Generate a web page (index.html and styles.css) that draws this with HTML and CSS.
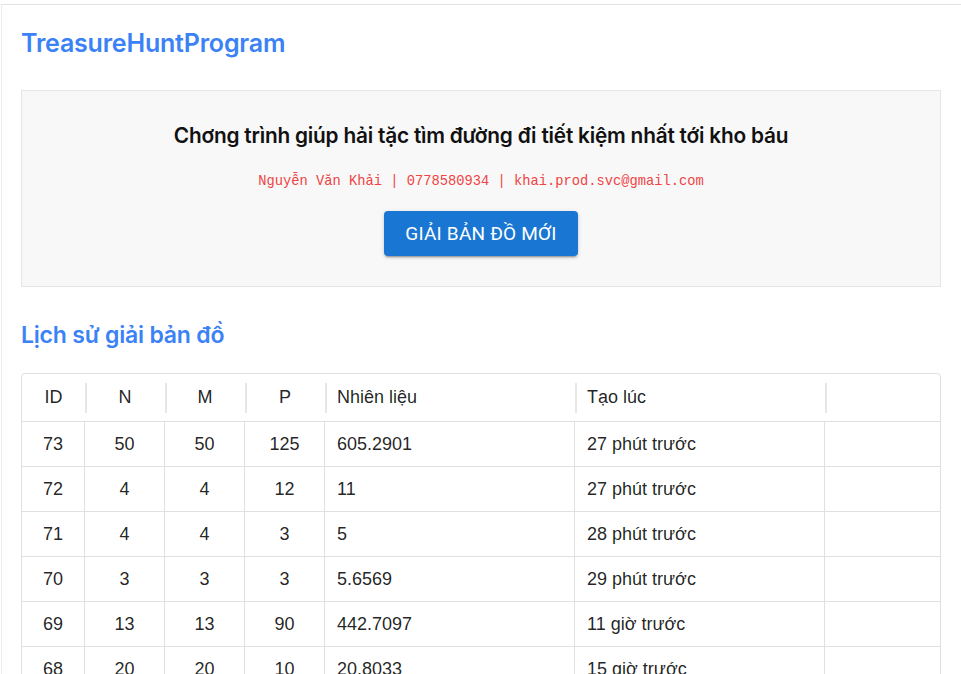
FILE: index.html
```html
<!DOCTYPE html>
<html lang="vi">
<head>
<meta charset="utf-8">
<title>TreasureHuntProgram</title>
<link rel="stylesheet" href="styles.css">
</head>
<body>
<div class="page">
  <h1 class="brand">TreasureHuntProgram</h1>
  <section class="intro">
    <h2 class="intro-title">Chơng trình giúp hải tặc tìm đường đi tiết kiệm nhất tới kho báu</h2>
    <p class="author">Nguyễn Văn Khải | 0778580934 | khai.prod.svc@gmail.com</p>
    <button class="btn-primary" type="button">GIẢI BẢN ĐỒ MỚI</button>
  </section>
  <h2 class="section-title">Lịch sử giải bản đồ</h2>
  <div class="grid-wrap">
    <table class="grid">
      <colgroup>
        <col class="c-id"><col class="c-num"><col class="c-num"><col class="c-num"><col class="c-wide"><col class="c-wide"><col>
      </colgroup>
      <thead>
        <tr>
          <th class="center">ID</th>
          <th class="center">N</th>
          <th class="center">M</th>
          <th class="center">P</th>
          <th>Nhiên liệu</th>
          <th>Tạo lúc</th>
          <th class="last"></th>
        </tr>
      </thead>
      <tbody>
        <tr><td class="center">73</td><td class="center">50</td><td class="center">50</td><td class="center">125</td><td>605.2901</td><td>27 phút trước</td><td></td></tr>
        <tr><td class="center">72</td><td class="center">4</td><td class="center">4</td><td class="center">12</td><td>11</td><td>27 phút trước</td><td></td></tr>
        <tr><td class="center">71</td><td class="center">4</td><td class="center">4</td><td class="center">3</td><td>5</td><td>28 phút trước</td><td></td></tr>
        <tr><td class="center">70</td><td class="center">3</td><td class="center">3</td><td class="center">3</td><td>5.6569</td><td>29 phút trước</td><td></td></tr>
        <tr><td class="center">69</td><td class="center">13</td><td class="center">13</td><td class="center">90</td><td>442.7097</td><td>11 giờ trước</td><td></td></tr>
        <tr><td class="center">68</td><td class="center">20</td><td class="center">20</td><td class="center">10</td><td>20.8033</td><td>15 giờ trước</td><td></td></tr>
      </tbody>
    </table>
  </div>
</div>
</body>
</html>
```
FILE: styles.css
```css
html, body {
  margin: 0;
  padding: 0;
  background: #ffffff;
}

.page {
  margin: 4px 0 0 1px;
  border-top: 1px solid #e3e3e3;
  border-left: 1px solid #ececec;
  padding: 0 20px 40px 19px;
  font-family: "Liberation Sans", Arial, sans-serif;
}

.brand {
  margin: 24px 0 33px;
  font-family: Inter, "Noto Sans", sans-serif;
  font-size: 25px;
  line-height: 28px;
  font-weight: 600;
  letter-spacing: -0.2px;
  color: #3b82f6;
}

.intro {
  background: #f8f8f8;
  border: 1px solid #e5e5e5;
  padding: 31px 20px 30px;
  display: flex;
  flex-direction: column;
  align-items: center;
}

.intro-title {
  margin: 0;
  font-family: Inter, "Noto Sans", sans-serif;
  font-size: 20.8px;
  line-height: 28px;
  font-weight: 600;
  letter-spacing: -0.2px;
  color: #111111;
}

.author {
  margin: 22px 0 19px;
  font-family: "Liberation Mono", "DejaVu Sans Mono", monospace;
  font-size: 13.75px;
  line-height: 20px;
  color: #ef4444;
}

.btn-primary {
  width: 194px;
  height: 45px;
  border: none;
  border-radius: 4px;
  background: #1976d2;
  color: #ffffff;
  font-family: Roboto, "Liberation Sans", sans-serif;
  font-size: 19px;
  font-weight: 400;
  letter-spacing: 0.2px;
  box-shadow: 0 3px 1px -2px rgba(0,0,0,0.2), 0 2px 2px 0 rgba(0,0,0,0.14), 0 1px 5px 0 rgba(0,0,0,0.12);
  cursor: pointer;
}

.section-title {
  margin: 34px 0 24px;
  font-family: Inter, "Noto Sans", sans-serif;
  font-size: 23px;
  line-height: 28px;
  font-weight: 600;
  letter-spacing: -0.2px;
  color: #3b82f6;
}

.grid-wrap {
  border: 1px solid #e0e0e0;
  border-radius: 4px;
  overflow: hidden;
}

.grid {
  width: 100%;
  border-collapse: separate;
  border-spacing: 0;
  table-layout: fixed;
  font-size: 18px;
  color: rgba(0,0,0,0.87);
}

.c-id { width: 63px; }
.c-num { width: 80px; }
.c-wide { width: 250px; }

.grid th {
  position: relative;
  height: 47px;
  padding: 0 12px;
  text-align: left;
  font-weight: 400;
  box-sizing: border-box;
}

.grid th::after {
  content: "";
  position: absolute;
  right: -2px;
  top: 9px;
  bottom: 8px;
  width: 2px;
  background: #e6e6e6;
}

.grid th.last::after {
  display: none;
}

.grid td {
  height: 45px;
  padding: 0 12px;
  box-sizing: border-box;
  border-top: 1px solid #e0e0e0;
  border-right: 1px solid #e0e0e0;
  white-space: nowrap;
}

.grid td:last-child {
  border-right: none;
}

.grid .center {
  text-align: center;
}
```
